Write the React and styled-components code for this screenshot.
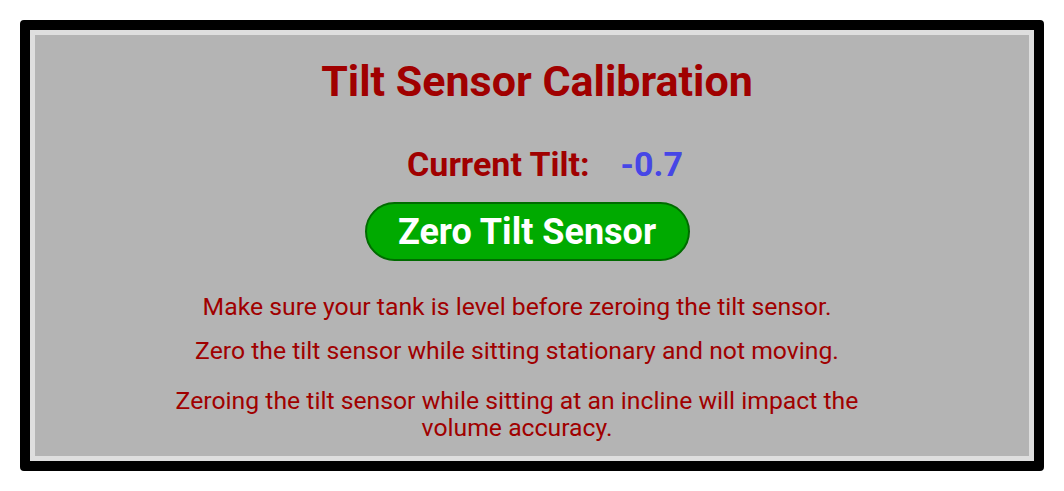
import React from 'react'
import styled, {createGlobalStyle} from 'styled-components'

const Global = createGlobalStyle`
    html, body {
        margin:0;
        padding:0;
        background:#fff;
        font-family:Roboto, "Liberation Sans", sans-serif;
    }
`

const Frame = styled.div`
    margin:20px;
    height:451px;
    box-sizing:border-box;
    border:10px solid #000;
    border-radius:4px;
    display:flex;
`

const Panel = styled.div`
    flex:1;
    border:5px solid #dedede;
    background:#b4b4b4;
    display:flex;
    flex-direction:column;
    align-items:center;
    color:#a00000;
`

const Title = styled.h1`
    margin:20px 0 0 10px;
    font-size:43px;
    line-height:52px;
    font-weight:700;
`

const TiltRow = styled.div`
    margin:37px 0 0 26px;
    display:flex;
    gap:31px;
    font-size:34px;
    line-height:40px;
    font-weight:700;
`

const TiltValue = styled.span`
    color:#4646e6;
`

const ZeroButton = styled.button`
    margin:18px 10px 0 0;
    width:325px;
    height:59px;
    box-sizing:border-box;
    border:2px solid #006b00;
    border-radius:30px;
    background:#00aa00;
    color:#fff;
    font-family:inherit;
    font-size:36px;
    font-weight:700;
    cursor:pointer;
`

const Note = styled.p`
    margin:${p => p.$top}px 30px 0 0;
    max-width:700px;
    font-size:24.75px;
    line-height:${p => p.$lh || 29}px;
    text-align:center;
`

export default function App() {
    return (
        <>
            <Global />
            <Frame>
                <Panel>
                    <Title>Tilt Sensor Calibration</Title>
                    <TiltRow>
                        <span>Current Tilt:</span>
                        <TiltValue>-0.7</TiltValue>
                    </TiltRow>
                    <ZeroButton>Zero Tilt Sensor</ZeroButton>
                    <Note $top={31}>Make sure your tank is level before zeroing the tilt sensor.</Note>
                    <Note $top={15}>Zero the tilt sensor while sitting stationary and not moving.</Note>
                    <Note $top={22} $lh={27}>Zeroing the tilt sensor while sitting at an incline will impact the volume accuracy.</Note>
                </Panel>
            </Frame>
        </>
    )
}
